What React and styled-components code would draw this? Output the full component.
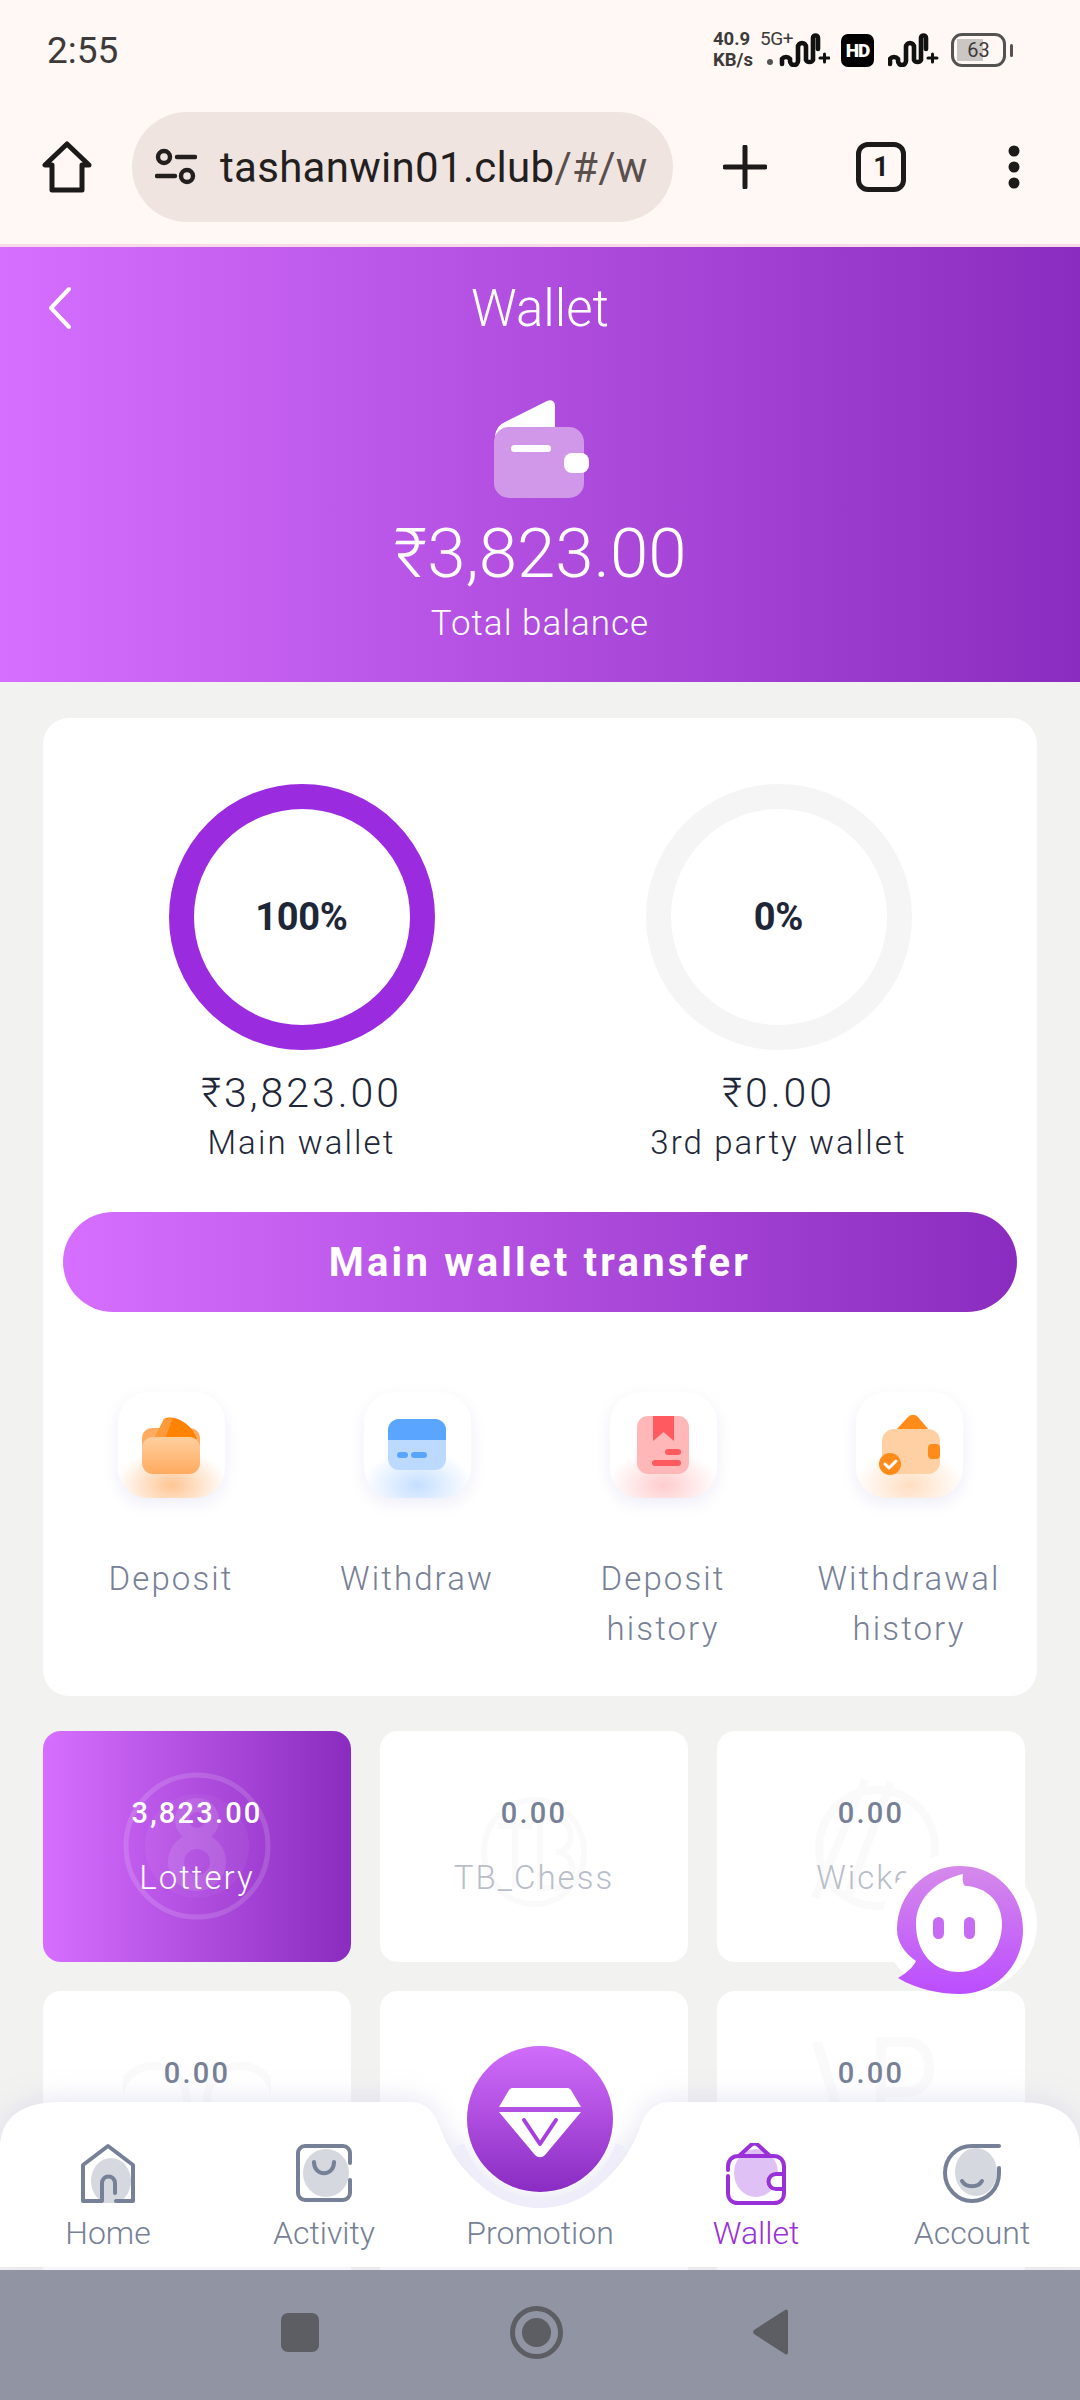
import React from 'react';
import styled, { createGlobalStyle } from 'styled-components';

const brandGradient = 'linear-gradient(90deg, #d66fff 0%, #8a2cbf 100%)';

const GlobalStyle = createGlobalStyle`
    html, body {
        margin: 0;
        padding: 0;
        background: #f2f2f1;
    }
    * {
        box-sizing: border-box;
    }
    body {
        font-family: Roboto, "Noto Sans", sans-serif;
    }
`;

const Phone = styled.div`
    display: flex;
    flex-direction: column;
    width: 1080px;
    height: 2400px;
    overflow: hidden;
`;

const Chrome = styled.div`
    flex: none;
    height: 247px;
    background: #fff8f5;
    border-bottom: 3px solid #f9d9e8;
`;

const StatusBar = styled.div`
    display: flex;
    justify-content: space-between;
    align-items: center;
    height: 100px;
    padding: 0 67px 0 47px;
`;

const Clock = styled.div`
    font-size: 37px;
    color: #3d3a39;
`;

const StatusIcons = styled.div`
    display: flex;
    align-items: center;
    color: #232120;
`;

const Speed = styled.div`
    width: 47px;
    font-size: 18.5px;
    font-weight: 700;
    line-height: 21px;
    color: #3d3a39;
`;

const NetWrap = styled.div`
    position: relative;
    width: 70px;
    height: 34px;
    margin-right: 11px;
`;

const NetLabel = styled.span`
    position: absolute;
    left: 0;
    top: -4px;
    font-size: 19px;
    line-height: 20px;
    letter-spacing: -0.4px;
    color: #3d3a39;
`;

const HdBadge = styled.div`
    display: flex;
    align-items: center;
    justify-content: center;
    width: 33px;
    height: 33px;
    margin-right: 14px;
    border-radius: 7px;
    background: #000;
    color: #fff;
    font-size: 19px;
    font-weight: 900;
    letter-spacing: -1px;
`;

const Battery = styled.div`
    position: relative;
    display: flex;
    align-items: center;
    justify-content: center;
    width: 55px;
    height: 34px;
    margin-left: 12px;
    border: 3.5px solid #555352;
    border-radius: 11px;
    font-size: 20px;
    color: #3d3a39;
    background: linear-gradient(90deg, #c9c6c3 0 60%, transparent 60%) 3px 3px / calc(100% - 6px) calc(100% - 6px) no-repeat;
`;

const BatteryTip = styled.div`
    width: 3px;
    height: 13px;
    margin-left: 4px;
    border-radius: 2px;
    background: #555352;
`;

const Toolbar = styled.div`
    display: flex;
    align-items: center;
    height: 134px;
    padding: 0 0 0 41px;
`;

const UrlPill = styled.div`
    display: flex;
    align-items: center;
    width: 541px;
    height: 110px;
    margin-left: 39px;
    padding-left: 23px;
    border-radius: 55px;
    background: #f0e4e0;
`;

const UrlText = styled.div`
    margin-left: 23px;
    font-size: 42px;
    letter-spacing: 0.3px;
    white-space: nowrap;
    color: #231f1e;
`;

const UrlFade = styled.span`
    color: #5a4f4c;
`;

const ToolAction = styled.div`
    position: relative;
    display: flex;
    align-items: center;
    justify-content: center;
    width: 60px;
    height: 60px;
    margin-left: ${(p) => p.$gap}px;
`;

const TabCount = styled.div`
    display: flex;
    align-items: center;
    justify-content: center;
    width: 50px;
    height: 50px;
    border: 5px solid #1d1b1a;
    border-radius: 12px;
    font-size: 27px;
    font-weight: 700;
    color: #1d1b1a;
`;

const Content = styled.div`
    position: relative;
    flex: 1;
    overflow: hidden;
`;

const Header = styled.header`
    display: flex;
    flex-direction: column;
    align-items: center;
    height: 435px;
    padding-top: 32px;
    color: #fff;
    background: ${brandGradient};
`;

const TitleRow = styled.div`
    position: relative;
    width: 100%;
    text-align: center;
    font-size: 51px;
    line-height: 60px;
    font-weight: 300;
`;

const BackIcon = styled.svg`
    position: absolute;
    left: 47px;
    top: 7px;
`;

const BalanceIcon = styled.svg`
    margin-top: 60px;
`;

const BalanceAmount = styled.div`
    margin-top: 18px;
    font-size: 69px;
    line-height: 74px;
    font-weight: 300;
`;

const BalanceLabel = styled.div`
    margin-top: 13px;
    font-size: 35px;
    line-height: 40px;
    font-weight: 300;
    letter-spacing: 1px;
`;

const WalletCard = styled.section`
    margin: 36px 43px 0;
    height: 978px;
    padding: 66px 5px 0;
    border-radius: 26px;
    background: #fff;
`;

const WalletsRow = styled.div`
    display: grid;
    grid-template-columns: 1fr 1fr;
    padding: 0 15px;
`;

const WalletCol = styled.div`
    display: flex;
    flex-direction: column;
    align-items: center;
`;

const Ring = styled.div`
    display: flex;
    align-items: center;
    justify-content: center;
    width: 266px;
    height: 266px;
    margin-bottom: 19px;
    border: 25px solid ${(p) => (p.$full ? '#9b2bdf' : '#f5f5f5')};
    border-radius: 50%;
    font-size: 38px;
    font-weight: 700;
    letter-spacing: -0.3px;
    color: #1e2637;
`;

const WalletAmount = styled.div`
    font-size: 41px;
    line-height: 48px;
    font-weight: 300;
    letter-spacing: 3px;
    color: #1e2637;
`;

const WalletName = styled.div`
    margin-top: 3px;
    font-size: 33px;
    line-height: 46px;
    letter-spacing: 2.1px;
    font-weight: 300;
    color: #1e2637;
`;

const TransferButton = styled.div`
    display: flex;
    align-items: center;
    justify-content: center;
    height: 100px;
    margin: 46px 15px 0;
    border-radius: 50px;
    background: ${brandGradient};
    color: #fff;
    font-size: 40px;
    font-weight: 700;
    letter-spacing: 3.2px;
`;

const ActionsGrid = styled.div`
    display: grid;
    grid-template-columns: repeat(4, 246px);
    margin-top: 80px;
`;

const Action = styled.div`
    display: flex;
    flex-direction: column;
    align-items: center;
`;

const ActionTile = styled.div`
    display: flex;
    align-items: center;
    justify-content: center;
    width: 107px;
    height: 106px;
    border-radius: 30px;
    box-shadow: 0 6px 16px rgba(208, 208, 237, 0.36);
    background: radial-gradient(ellipse 52% 34% at 50% 88%, ${(p) => p.$glow}, rgba(255, 255, 255, 0) 100%), #fff;
`;

const ActionLabel = styled.div`
    margin-top: 56px;
    width: 220px;
    text-align: center;
    font-size: 33px;
    line-height: 50px;
    font-weight: 300;
    letter-spacing: 2.1px;
    color: #768096;
`;

const GamesGrid = styled.div`
    display: grid;
    grid-template-columns: repeat(3, 308px);
    grid-auto-rows: 231px;
    gap: 29px;
    margin: 35px 0 0 43px;
`;

const GameTile = styled.div`
    position: relative;
    display: flex;
    flex-direction: column;
    align-items: center;
    padding-top: 63px;
    overflow: hidden;
    border-radius: 18px;
    background: ${(p) => (p.$active ? brandGradient : '#fff')};
`;

const GameMark = styled.svg`
    position: absolute;
    left: 80px;
    top: 41px;
`;

const GameAmount = styled.div`
    position: relative;
    font-size: 29px;
    line-height: 38px;
    font-weight: 500;
    letter-spacing: 2.2px;
    color: ${(p) => (p.$active ? '#fff' : '#768096')};
`;

const GameName = styled.div`
    position: relative;
    margin-top: 24px;
    font-size: 33px;
    line-height: 44px;
    font-weight: 300;
    letter-spacing: 2px;
    color: ${(p) => (p.$active ? '#fff' : '#b8bec9')};
`;

const ChatBubble = styled.div`
    position: absolute;
    left: 882px;
    top: 1606px;
    display: flex;
    align-items: flex-end;
    justify-content: center;
    width: 155px;
    height: 142px;
    border-radius: 50%;
    background: #fff;
`;

const TabBar = styled.nav`
    position: absolute;
    left: 0;
    right: 0;
    bottom: 3px;
    height: 190px;
    display: grid;
    grid-template-columns: repeat(5, 216px);
`;

const TabShape = styled.svg`
    position: absolute;
    left: 0;
    bottom: 0;
    overflow: visible;
    filter: drop-shadow(0 -3px 12px rgba(205, 205, 232, 0.5));
`;

const TabItem = styled.div`
    position: relative;
    display: flex;
    flex-direction: column;
    align-items: center;
    justify-content: flex-end;
    padding-bottom: 14px;
`;

const TabIconBox = styled.div`
    margin-bottom: 10px;
    height: 60px;
`;

const TabLabel = styled.div`
    font-size: 32px;
    line-height: 40px;
    font-weight: 300;
    color: ${(p) => (p.$active ? '#9a30d8' : '#768096')};
`;

const PromoButton = styled.div`
    position: absolute;
    left: 35px;
    top: -31px;
    display: flex;
    align-items: center;
    justify-content: center;
    width: 146px;
    height: 146px;
    padding-top: 8px;
    border-radius: 50%;
    background: linear-gradient(180deg, #d06dfb 0%, #8a2cc2 100%);
`;

const SystemNav = styled.div`
    flex: none;
    display: flex;
    align-items: center;
    height: 130px;
    padding: 0 0 6px 281px;
    background: #9195a3;
`;

const NavSquare = styled.div`
    width: 38px;
    height: 39px;
    margin-right: 191px;
    border-radius: 7px;
    background: #5c5e63;
`;

const NavCircle = styled.div`
    display: flex;
    align-items: center;
    justify-content: center;
    width: 53px;
    height: 53px;
    margin-right: 189px;
    border: 5px solid #5c5e63;
    border-radius: 50%;

    &::after {
        content: '';
        width: 29px;
        height: 29px;
        border-radius: 50%;
        background: #5c5e63;
    }
`;

const SignalWave = () => (
    <svg width="51" height="34" viewBox="0 0 51 34" fill="none" stroke="#111" strokeWidth="4.6" strokeLinecap="round" strokeLinejoin="round">
        <path d="M2 31v-5a5 5 0 0 1 8 0v2a4 4 0 0 0 8 0V14a4 4 0 0 1 8 0v13a4 4 0 0 0 7 0V5a2 2 0 0 1 5 0v11" />
        <path d="M40 25h9M44.500 21v8" strokeWidth="3" />
    </svg>
);

const HomeOutline = () => (
    <svg width="52" height="52" viewBox="0 0 50 52" fill="none" stroke="#1d1b1a" strokeWidth="5" strokeLinejoin="round">
        <path d="M25 3L3 24h7v25h30V24h7z" />
    </svg>
);

const TuneIcon = () => (
    <svg width="42" height="38" viewBox="0 0 42 38" fill="none" stroke="#231f1e" strokeWidth="4.4" strokeLinecap="round">
        <circle cx="9" cy="9" r="6" />
        <circle cx="32" cy="28" r="6" />
        <path d="M22 9h18M2 28h18" />
    </svg>
);

const PlusIcon = () => (
    <svg width="44" height="44" viewBox="0 0 44 44" stroke="#1d1b1a" strokeWidth="5" strokeLinecap="round">
        <path d="M22 2v40M2 22h40" />
    </svg>
);

const DotsIcon = () => (
    <svg width="14" height="44" viewBox="0 0 14 44" fill="#1d1b1a">
        <circle cx="7" cy="6" r="5.500" />
        <circle cx="7" cy="22" r="5.500" />
        <circle cx="7" cy="38" r="5.500" />
    </svg>
);

const WalletHero = () => (
    <BalanceIcon width="97" height="100" viewBox="0 0 97 100">
        <path d="M3 40c0-8 3-13 8-16L55 2c4-2 8 0 8 5v30H3z" fill="#fff" />
        <rect x="2" y="28" width="90" height="71" rx="15" fill="#d198ea" />
        <rect x="19" y="46" width="40" height="7" rx="3.500" fill="#fff" />
        <rect x="72" y="54" width="25" height="20" rx="8" fill="#fff" />
    </BalanceIcon>
);

const DepositIcon = () => (
    <svg width="60" height="60" viewBox="0 0 60 60">
        <defs>
            <linearGradient id="depositFront" x1="0" y1="0" x2="0" y2="1">
                <stop offset="0" stopColor="#ffcf9f" />
                <stop offset="1" stopColor="#ffab5f" />
            </linearGradient>
        </defs>
        <path d="M1 36V24c0-7 4-11 11-11h36c7 0 11 4 11 11v12z" fill="#ffac60" />
        <path d="M13 24L23 4c9-5 27 3 33 20z" fill="#ff8200" />
        <path d="M13 24L23 4l9-1-8 21z" fill="#ff9a3a" />
        <rect x="1" y="22" width="58" height="37" rx="11" fill="url(#depositFront)" />
    </svg>
);

const WithdrawIcon = () => (
    <svg width="58" height="52" viewBox="0 0 58 52">
        <rect width="58" height="51" rx="11" fill="#bcd9ff" />
        <path d="M0 21V11C0 5 5 0 11 0h36c6 0 11 5 11 11v10z" fill="#5aa5ff" />
        <rect x="9" y="33" width="11" height="6" rx="3" fill="#5aa5ff" />
        <rect x="23" y="33" width="16" height="6" rx="3" fill="#5aa5ff" />
    </svg>
);

const DepositHistoryIcon = () => (
    <svg width="52" height="58" viewBox="0 0 52 58">
        <rect width="52" height="58" rx="11" fill="#ffb7b8" />
        <path d="M16 0h21v25l-10.500-9L16 25z" fill="#ff5a5f" />
        <rect x="28" y="33" width="16" height="6" rx="3" fill="#ff5a5f" />
        <rect x="15" y="44" width="29" height="6" rx="3" fill="#ff5a5f" />
    </svg>
);

const WithdrawHistoryIcon = () => (
    <svg width="62" height="62" viewBox="0 0 62 62">
        <path d="M18 16L30 3c3-3 7-3 10 0l11 13z" fill="#ff8c1a" />
        <rect x="4" y="15" width="58" height="45" rx="12" fill="#ffd0a3" />
        <rect x="50" y="30" width="12" height="15" rx="4" fill="#ff8c1a" />
        <circle cx="12" cy="50" r="11" fill="#ff8c1a" />
        <path d="M7 50l4 4 7-7" fill="none" stroke="#fff" strokeWidth="3" strokeLinecap="round" strokeLinejoin="round" />
    </svg>
);

const LotteryMark = () => (
    <GameMark width="148" height="148" viewBox="0 0 148 148" fill="none" stroke="#fff" opacity="0.14">
        <circle cx="74" cy="74" r="71" strokeWidth="5" />
        <circle cx="74" cy="74" r="52" fill="#fff" fillOpacity="0.3" stroke="none" />
        <circle cx="74" cy="48" r="15" strokeWidth="14" />
        <circle cx="74" cy="90" r="21" strokeWidth="16" />
    </GameMark>
);

const ChessMark = () => (
    <GameMark width="148" height="148" viewBox="0 0 148 148" fill="none" stroke="#fafafb" strokeWidth="6">
        <ellipse cx="74" cy="80" rx="50" ry="52" />
        <path d="M38 54h34M55 54v62M80 46h14c22 0 22 34 2 34 22 0 22 36-2 36H80z" />
    </GameMark>
);

const WicketMark = () => (
    <GameMark width="148" height="148" viewBox="0 0 148 148" fill="none" stroke="#fafafb" strokeWidth="8">
        <circle cx="80" cy="76" r="58" />
        <path d="M18 126L68 8M50 126L94 10" />
    </GameMark>
);

const DoubleMark = () => (
    <GameMark width="148" height="148" viewBox="0 0 148 148" fill="none" stroke="#fafafb" strokeWidth="8">
        <circle cx="30" cy="68" r="34" />
        <circle cx="118" cy="68" r="34" />
    </GameMark>
);

const LetterMark = () => (
    <GameMark width="148" height="148" viewBox="0 0 148 148" fill="none" stroke="#fafafb" strokeWidth="10">
        <path d="M20 10l30 100M84 110V10h26c30 0 30 50 0 50H84" />
    </GameMark>
);

const ChatIcon = () => (
    <svg width="128" height="130" viewBox="0 0 128 130">
        <defs>
            <linearGradient id="chatFill" x1="0" y1="0" x2="0" y2="1">
                <stop offset="0" stopColor="#d58aea" />
                <stop offset="1" stopColor="#bb4dff" />
            </linearGradient>
        </defs>
        <path d="M64 1c36 0 63 28 63 64 0 35-27 64-63 64-19 0-42-4-62-16 10-6 15-11 18-17C8 88 1 76 1 65 1 29 29 1 64 1z" fill="url(#chatFill)" />
        <path d="M67 9C45 14 20 30 20 59c0 29 18 48 43 48s43-22 43-48c0-23-16-37-36-38-3 0-4-6-3-12z" fill="#fff" />
        <rect x="37" y="52" width="11" height="22" rx="5.500" fill="#c56cf2" />
        <rect x="68" y="52" width="11" height="22" rx="5.500" fill="#c56cf2" />
    </svg>
);

const HomeTab = () => (
    <svg width="60" height="60" viewBox="0 0 60 60" fill="none">
        <ellipse cx="33" cy="38" rx="20" ry="23" fill="#d5d8de" />
        <path d="M24 58H5V22L30 3l25 19v36H38M24 58V40a6.500 6.500 0 0 1 13 0v10" stroke="#768096" strokeWidth="4" strokeLinejoin="round" strokeLinecap="round" />
    </svg>
);

const ActivityTab = () => (
    <svg width="60" height="60" viewBox="0 0 60 60" fill="none">
        <ellipse cx="32" cy="30" rx="23" ry="24" fill="#d5d8de" />
        <path d="M56 20V10a7 7 0 0 0-7-7H11a7 7 0 0 0-7 7v40a7 7 0 0 0 7 7h38a7 7 0 0 0 7-7V37" stroke="#768096" strokeWidth="4" strokeLinecap="round" />
        <path d="M20 19c0 15 20 15 20 0" stroke="#768096" strokeWidth="4" strokeLinecap="round" />
    </svg>
);

const WalletTab = () => (
    <svg width="62" height="62" viewBox="0 0 62 62" fill="none">
        <ellipse cx="31" cy="30" rx="22" ry="24" fill="#e0c1f5" />
        <path d="M14 13L26 2c2-2 5-2 7 0l12 11" stroke="#9a30d8" strokeWidth="4" strokeLinejoin="round" />
        <path d="M3 24c0-7 4-11 11-11h34c7 0 11 4 11 11v6M59 46v4c0 6-4 10-10 10H13c-6 0-10-4-10-10V33M3 27v-3" stroke="#9a30d8" strokeWidth="4" strokeLinecap="round" />
        <path d="M59 31H51a7 7 0 0 0 0 15h8z" stroke="#9a30d8" strokeWidth="4" fill="#fff" />
    </svg>
);

const AccountTab = () => (
    <svg width="60" height="60" viewBox="0 0 60 60" fill="none">
        <ellipse cx="34" cy="29" rx="21" ry="24" fill="#d5d8de" />
        <path d="M57 3H30C14 3 3 15 3 30s12 28 27 28 27-12 27-28v-5" stroke="#768096" strokeWidth="4" strokeLinecap="round" />
        <path d="M20 38c4 7 16 7 20 0" stroke="#768096" strokeWidth="4" strokeLinecap="round" />
    </svg>
);

const DiamondIcon = () => (
    <svg width="82" height="70" viewBox="0 0 82 70" fill="#fff">
        <path d="M10 2c1-1 2-2 3-2h56c1 0 2 1 3 2l10 17H0z" />
        <path d="M0 24h82L46 67c-3 3-7 3-10 0z" />
        <path d="M25 32l16 24 16-24" fill="none" stroke="#a73fe0" strokeWidth="4" strokeLinecap="round" strokeLinejoin="round" />
    </svg>
);

const actions = [
    { label: 'Deposit', glow: 'rgba(255, 150, 60, 0.55)', Icon: DepositIcon },
    { label: 'Withdraw', glow: 'rgba(110, 175, 255, 0.4)', Icon: WithdrawIcon },
    { label: 'Deposit history', glow: 'rgba(255, 110, 115, 0.35)', Icon: DepositHistoryIcon },
    { label: 'Withdrawal history', glow: 'rgba(255, 160, 80, 0.35)', Icon: WithdrawHistoryIcon },
];

const games = [
    { amount: '3,823.00', name: 'Lottery', active: true, Mark: LotteryMark },
    { amount: '0.00', name: 'TB_Chess', Mark: ChessMark },
    { amount: '0.00', name: 'Wicket', Mark: WicketMark },
    { amount: '0.00', name: 'Casino', Mark: DoubleMark },
    { amount: '', name: '' },
    { amount: '0.00', name: 'JDB', Mark: LetterMark },
    { amount: '', name: '' },
    { amount: '', name: '' },
    { amount: '', name: '' },
];

const tabs = [
    { label: 'Home', Icon: HomeTab },
    { label: 'Activity', Icon: ActivityTab },
    { label: 'Promotion' },
    { label: 'Wallet', Icon: WalletTab, active: true },
    { label: 'Account', Icon: AccountTab },
];

const App = () => (
    <Phone>
        <GlobalStyle />
        <Chrome>
            <StatusBar>
                <Clock>2:55</Clock>
                <StatusIcons>
                    <Speed>
                        40.9
                        <br />
                        KB/s
                    </Speed>
                    <NetWrap>
                        <NetLabel>5G+</NetLabel>
                        <svg width="70" height="34" viewBox="0 0 70 34">
                            <circle cx="10" cy="29" r="3" fill="#555" />
                            <g transform="translate(20 0)">
                                <path d="M2 31v-5a5 5 0 0 1 8 0v2a4 4 0 0 0 8 0V14a4 4 0 0 1 8 0v13a4 4 0 0 0 7 0V5a2 2 0 0 1 5 0v11" fill="none" stroke="#111" strokeWidth="4.600" strokeLinecap="round" />
                                <path d="M40 25h9M44.500 21v8" stroke="#111" strokeWidth="3" strokeLinecap="round" />
                            </g>
                        </svg>
                    </NetWrap>
                    <HdBadge>HD</HdBadge>
                    <SignalWave />
                    <Battery>63</Battery>
                    <BatteryTip />
                </StatusIcons>
            </StatusBar>
            <Toolbar>
                <HomeOutline />
                <UrlPill>
                    <TuneIcon />
                    <UrlText>
                        tashanwin01.club<UrlFade>/#/w</UrlFade>
                    </UrlText>
                </UrlPill>
                <ToolAction $gap={42}>
                    <PlusIcon />
                </ToolAction>
                <ToolAction $gap={76}>
                    <TabCount>1</TabCount>
                </ToolAction>
                <ToolAction $gap={73}>
                    <DotsIcon />
                </ToolAction>
            </Toolbar>
        </Chrome>
        <Content>
            <Header>
                <TitleRow>
                    <BackIcon width="26" height="44" viewBox="0 0 26 44" fill="none" stroke="#fff" strokeWidth="4" strokeLinecap="round" strokeLinejoin="round">
                        <path d="M22 3L4 22l18 19" />
                    </BackIcon>
                    Wallet
                </TitleRow>
                <WalletHero />
                <BalanceAmount>₹3,823.00</BalanceAmount>
                <BalanceLabel>Total balance</BalanceLabel>
            </Header>
            <WalletCard>
                <WalletsRow>
                    <WalletCol>
                        <Ring $full>100%</Ring>
                        <WalletAmount>₹3,823.00</WalletAmount>
                        <WalletName>Main wallet</WalletName>
                    </WalletCol>
                    <WalletCol>
                        <Ring>0%</Ring>
                        <WalletAmount>₹0.00</WalletAmount>
                        <WalletName>3rd party wallet</WalletName>
                    </WalletCol>
                </WalletsRow>
                <TransferButton>Main wallet transfer</TransferButton>
                <ActionsGrid>
                    {actions.map(({ label, glow, Icon }) => (
                        <Action key={label}>
                            <ActionTile $glow={glow}>
                                <Icon />
                            </ActionTile>
                            <ActionLabel>{label}</ActionLabel>
                        </Action>
                    ))}
                </ActionsGrid>
            </WalletCard>
            <GamesGrid>
                {games.map(({ amount, name, active, Mark }, i) => (
                    <GameTile key={i} $active={active}>
                        {Mark && <Mark />}
                        <GameAmount $active={active}>{amount}</GameAmount>
                        <GameName $active={active}>{name}</GameName>
                    </GameTile>
                ))}
            </GamesGrid>
            <ChatBubble>
                <ChatIcon />
            </ChatBubble>
            <TabBar>
                <TabShape width="1080" height="210" viewBox="0 0 1080 210">
                    <path
                        d="M0 92C0 58 25 45 60 45H410C428 45 436 58 441 73C458 118 500 151 540 151C580 151 622 118 639 73C644 58 652 45 670 45H1020C1055 45 1080 58 1080 92V210H0z"
                        fill="#fff"
                    />
                    <path d="M460 88A84 84 0 0 0 620 88" fill="none" stroke="#eeedf9" strokeWidth="9" />
                </TabShape>
                {tabs.map(({ label, Icon, active }) => (
                    <TabItem key={label}>
                        {Icon ? (
                            <TabIconBox>
                                <Icon />
                            </TabIconBox>
                        ) : (
                            <PromoButton>
                                <DiamondIcon />
                            </PromoButton>
                        )}
                        <TabLabel $active={active}>{label}</TabLabel>
                    </TabItem>
                ))}
            </TabBar>
        </Content>
        <SystemNav>
            <NavSquare />
            <NavCircle />
            <svg width="38" height="46" viewBox="0 0 38 46" fill="#5c5e63">
                <path d="M36 2v42a2 2 0 0 1-3 1L2 25a3 3 0 0 1 0-4L33 1a2 2 0 0 1 3 1z" />
            </svg>
        </SystemNav>
    </Phone>
);

export default App;
